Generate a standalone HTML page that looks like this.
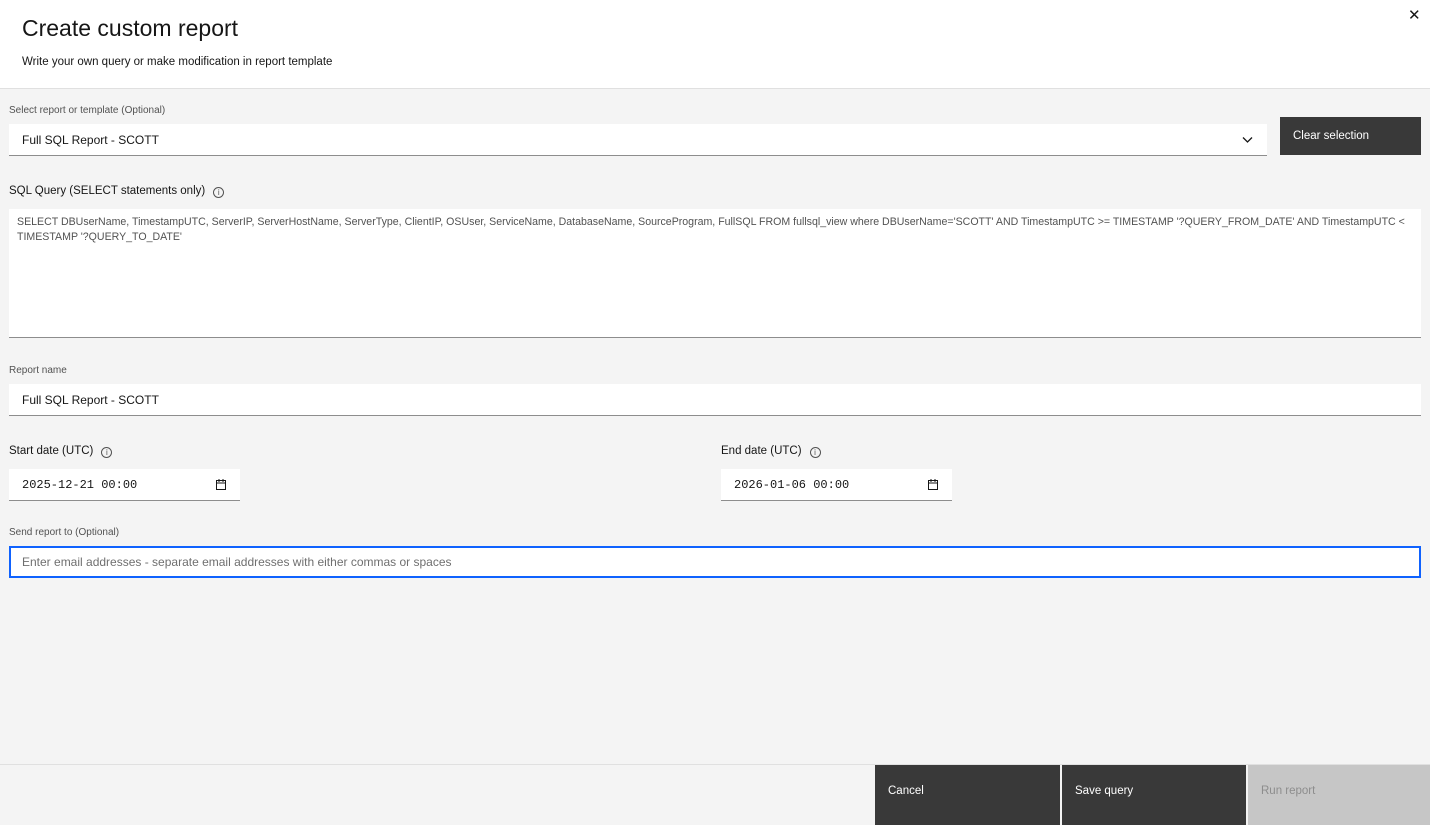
<!DOCTYPE html>
<html><head><style>
*{box-sizing:border-box;margin:0;padding:0}
body{width:1430px;height:825px;overflow:hidden;background:#f4f4f4;font-family:"Liberation Sans",sans-serif;color:#161616;position:relative}
.a{position:absolute}
.hdr{left:0;top:0;width:1430px;height:89px;background:#fff;border-bottom:1px solid #e0e0e0}
.lbl{font-size:10px;color:#525252}
.lbl2{font-size:11.5px;color:#161616}
.inp{background:#fff;border-bottom:1px solid #8d8d8d;font-size:12px;padding-left:13px;display:flex;align-items:center}
.info{display:inline-block;width:11px;height:11px;border:1px solid #525252;border-radius:50%;font-size:8px;text-align:center;line-height:9px;margin-left:8px;vertical-align:-1px;color:#525252}
.btn{top:765px;height:60px;background:#393939;color:#fff;font-size:11.5px;padding:20px 13px}
.mono{font-family:"Liberation Mono",monospace;font-size:12px}
</style></head><body>
<div class="a hdr"></div>
<div class="a" style="left:22px;top:15px;font-size:23px;font-weight:300">Create custom report</div>
<div class="a" style="left:22px;top:56px;font-size:11.5px">Write your own query or make modification in report template</div>
<div class="a" style="left:1408px;top:6px;font-size:15px">✕</div>

<div class="a lbl" style="left:9px;top:105px">Select report or template (Optional)</div>
<div class="a inp" style="left:9px;top:124px;width:1258px;height:32px">Full SQL Report - SCOTT</div>
<svg class="a" style="left:1242px;top:136px" width="11" height="8" viewBox="0 0 11 8"><path d="M1 1.5l4.5 4.5 4.5-4.5" stroke="#161616" stroke-width="1.3" fill="none"/></svg>
<div class="a" style="left:1280px;top:117px;width:141px;height:38px;background:#393939;color:#fff;font-size:11.5px;padding:13px 13px">Clear selection</div>

<div class="a lbl2" style="left:9px;top:185px">SQL Query (SELECT statements only)<span class="info">i</span></div>
<div class="a" style="left:9px;top:209px;width:1412px;height:129px;background:#fff;border-bottom:1px solid #8d8d8d;font-size:10.6px;color:#525252;padding:6px 8px;line-height:15px">SELECT DBUserName, TimestampUTC, ServerIP, ServerHostName, ServerType, ClientIP, OSUser, ServiceName, DatabaseName, SourceProgram, FullSQL FROM fullsql_view where DBUserName='SCOTT' AND TimestampUTC &gt;= TIMESTAMP '?QUERY_FROM_DATE' AND TimestampUTC &lt; TIMESTAMP '?QUERY_TO_DATE'</div>

<div class="a lbl" style="left:9px;top:365px">Report name</div>
<div class="a inp" style="left:9px;top:384px;width:1412px;height:32px">Full SQL Report - SCOTT</div>

<div class="a lbl2" style="left:9px;top:445px">Start date (UTC)<span class="info">i</span></div>
<div class="a inp mono" style="left:9px;top:469px;width:231px;height:32px">2025-12-21 00:00</div>
<div class="a lbl2" style="left:721px;top:445px">End date (UTC)<span class="info">i</span></div>
<div class="a inp mono" style="left:721px;top:469px;width:231px;height:32px">2026-01-06 00:00</div>
<svg class="a" style="left:216px;top:479px" width="10" height="11" viewBox="0 0 10 11"><rect x=".5" y="1.5" width="9" height="9" fill="none" stroke="#161616"/><path d="M.5 4h9M3 0v3M7 0v3" stroke="#161616"/></svg>
<svg class="a" style="left:928px;top:479px" width="10" height="11" viewBox="0 0 10 11"><rect x=".5" y="1.5" width="9" height="9" fill="none" stroke="#161616"/><path d="M.5 4h9M3 0v3M7 0v3" stroke="#161616"/></svg>

<div class="a lbl" style="left:9px;top:527px">Send report to (Optional)</div>
<div class="a" style="left:9px;top:546px;width:1412px;height:32px;background:#fff;border:2px solid #0f62fe;font-size:12px;color:#6f6f6f;padding:7px 11px">Enter email addresses - separate email addresses with either commas or spaces</div>

<div class="a" style="left:0;top:764px;width:1430px;height:1px;background:#e0e0e0"></div>
<div class="a btn" style="left:875px;width:185px">Cancel</div>
<div class="a btn" style="left:1062px;width:184px">Save query</div>
<div class="a btn" style="left:1248px;width:182px;background:#c6c6c6;color:#8d8d8d">Run report</div>
</body></html>
